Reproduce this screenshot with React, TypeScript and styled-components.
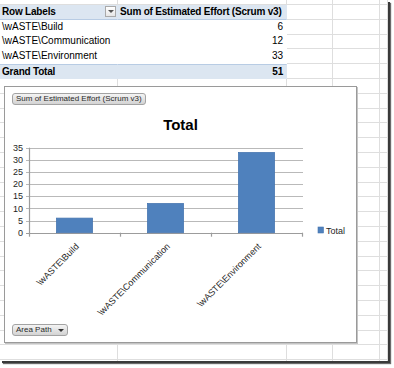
import React from "react";
import styled, { createGlobalStyle } from "styled-components";

const GlobalStyle = createGlobalStyle`
  html, body { margin: 0; padding: 0; background: #ffffff; }
  body { font-family: "Liberation Sans", Arial, sans-serif; }
`;

const GRID = "#dedede";
const BAND = "#dce6f1";
const BAND_LINE = "#b8cce4";
const COLS = [118, 169, 46, 47, 8];
const ROW_H = 14.8;

const Canvas = styled.div`
  width: 394px;
  height: 368px;
  overflow: hidden;
  background: #ffffff;
`;

const Sheet = styled.div`
  position: relative;
  width: 388px;
  height: 361px;
  background: #ffffff;
  overflow: hidden;
  display: flex;
  flex-direction: column;
`;

const SheetShadow = styled.div`
  width: 388px;
  height: 361px;
  box-shadow: 2px 2px 0 #3a3a3a, 3px 3px 1px #6a6a6a;
`;

const Row = styled.div<{ $h: number }>`
  display: flex;
  flex: 0 0 auto;
  height: ${(p) => p.$h}px;
`;

const Cell = styled.div<{
  $w: number;
  $fill?: string;
  $bold?: boolean;
  $right?: boolean;
  $plain?: boolean;
  $top?: string;
  $bottom?: string;
}>`
  box-sizing: border-box;
  flex: 0 0 ${(p) => p.$w}px;
  height: 100%;
  display: flex;
  align-items: center;
  justify-content: ${(p) => (p.$right ? "flex-end" : "space-between")};
  padding: 0 3px 0 2px;
  background: ${(p) => p.$fill || "#ffffff"};
  border-right: 1px solid ${(p) => (p.$plain ? p.$fill || "#ffffff" : GRID)};
  border-bottom: 1px solid ${(p) => p.$bottom || (p.$plain ? p.$fill || "#ffffff" : GRID)};
  border-top: ${(p) => (p.$top ? `1px solid ${p.$top}` : "none")};
  font-size: 10px;
  font-weight: ${(p) => (p.$bold ? 700 : 400)};
  letter-spacing: ${(p) => (p.$bold ? "-0.2px" : "0")};
  color: #000000;
  white-space: nowrap;
  overflow: hidden;
  line-height: 12px;
`;

const DropButton = styled.span`
  box-sizing: border-box;
  width: 11px;
  height: 11px;
  border: 1px solid #a9a9a9;
  background: linear-gradient(#ffffff, #e6e6e6);
  display: flex;
  align-items: center;
  justify-content: center;
  margin-right: -2px;
  &::after {
    content: "";
    border-left: 3px solid transparent;
    border-right: 3px solid transparent;
    border-top: 3px solid #555555;
  }
`;

const ChartFrame = styled.div`
  position: absolute;
  left: 4px;
  top: 86px;
  width: 353px;
  height: 257px;
  box-sizing: border-box;
  background: #ffffff;
  border: 1px solid #9a9a9a;
  box-shadow: 1px 1px 0 #c4c4c4;
  display: flex;
  flex-direction: column;
  align-items: stretch;
`;

const FieldButton = styled.div<{ $ml: number; $mt: number }>`
  align-self: flex-start;
  box-sizing: border-box;
  height: 12px;
  margin: ${(p) => p.$mt}px 0 0 ${(p) => p.$ml}px;
  padding: 0 3px;
  border: 1px solid #a3a3a3;
  border-radius: 3px;
  background: linear-gradient(#f4f4f4, #d3d3d3);
  font-size: 8px;
  line-height: 10px;
  color: #2a2a2a;
  white-space: nowrap;
  display: flex;
  align-items: center;
  gap: 6px;
`;

const Caret = styled.span`
  width: 0;
  height: 0;
  border-left: 3px solid transparent;
  border-right: 3px solid transparent;
  border-top: 3px solid #333333;
`;

const Title = styled.div`
  margin-top: 11px;
  height: 18px;
  line-height: 18px;
  text-align: center;
  font-size: 15px;
  font-weight: 700;
  color: #000000;
`;

const Plot = styled.svg`
  display: block;
  margin-top: 9px;
  flex: 0 0 auto;
`;

const Y0 = 89.7;
const UNIT = 12.143 / 5;
const yOf = (v: number) => Y0 - v * UNIT;

const data = [
  { label: "\\wASTE\\Build", value: 6 },
  { label: "\\wASTE\\Communication", value: 12 },
  { label: "\\wASTE\\Environment", value: 33 },
];

const ticks = [0, 5, 10, 15, 20, 25, 30, 35];
const catTicks = [24, 115, 206, 297];

const ChartPlot: React.FC = () => (
  <Plot width={351} height={180} viewBox="0 0 351 180">
    {ticks.map((t) => (
      <g key={t}>
        <line
          x1={21}
          x2={298}
          y1={Math.round(yOf(t)) + 0.5}
          y2={Math.round(yOf(t)) + 0.5}
          stroke={t === 0 ? "#9c9c9c" : "#b9b9b9"}
          strokeWidth={1.2}
        />
        <text
          x={18}
          y={yOf(t) + 3.2}
          textAnchor="end"
          fontSize={9}
          fontFamily="Liberation Sans, Arial, sans-serif"
          fill="#1e1e1e"
        >
          {t}
        </text>
      </g>
    ))}
    <line x1={24.5} x2={24.5} y1={yOf(35)} y2={Y0 + 1} stroke="#9c9c9c" strokeWidth={1.2} />
    {catTicks.map((x) => (
      <line key={x} x1={x + 0.5} x2={x + 0.5} y1={Y0} y2={Y0 + 4} stroke="#9c9c9c" strokeWidth={1.2} />
    ))}
    {data.map((d, i) => {
      const cx = 69.5 + i * 91;
      const top = yOf(d.value);
      return (
        <g key={d.label}>
          <rect
            x={cx - 18}
            y={top}
            width={36}
            height={Y0 - top}
            fill="#4f81bd"
            stroke="#4675b0"
            strokeWidth={0.8}
          />
          <text
            x={cx + 5}
            y={104}
            textAnchor="end"
            fontSize={9}
            fontFamily="Liberation Sans, Arial, sans-serif"
            fill="#1e1e1e"
            transform={`rotate(-45 ${cx + 5} 104)`}
          >
            {d.label}
          </text>
        </g>
      );
    })}
    <rect x={313} y={84} width={5.5} height={6} fill="#4f81bd" stroke="#4675b0" strokeWidth={0.6} />
    <text x={321} y={91} fontSize={9} fontFamily="Liberation Sans, Arial, sans-serif" fill="#1e1e1e">
      Total
    </text>
  </Plot>
);

type CellSpec = {
  text?: string;
  bold?: boolean;
  right?: boolean;
  fill?: string;
  plain?: boolean;
  top?: string;
  bottom?: string;
  drop?: boolean;
};

const blank = (): CellSpec[] => COLS.map(() => ({}));

const pivotRow = (a: CellSpec, b: CellSpec): CellSpec[] => [a, b, {}, {}, {}];

const rows: { h: number; cells: CellSpec[] }[] = [
  { h: 5, cells: blank() },
  {
    h: ROW_H,
    cells: pivotRow(
      { text: "Row Labels", bold: true, fill: BAND, plain: true, bottom: BAND_LINE, drop: true },
      { text: "Sum of Estimated Effort (Scrum v3)", bold: true, fill: BAND, plain: true, bottom: BAND_LINE }
    ),
  },
  ...data.map((d) => ({
    h: ROW_H,
    cells: pivotRow(
      { text: d.label, plain: true },
      { text: String(d.value), right: true, plain: true }
    ),
  })),
  {
    h: ROW_H,
    cells: pivotRow(
      { text: "Grand Total", bold: true, fill: BAND, plain: true, top: BAND_LINE },
      { text: "51", bold: true, right: true, fill: BAND, plain: true, top: BAND_LINE }
    ),
  },
  ...Array.from({ length: 20 }, () => ({ h: ROW_H, cells: blank() })),
];

export default function App() {
  return (
    <Canvas>
      <GlobalStyle />
      <SheetShadow>
        <Sheet>
          {rows.map((r, ri) => (
            <Row key={ri} $h={r.h}>
              {r.cells.map((c, ci) => (
                <Cell
                  key={ci}
                  $w={COLS[ci]}
                  $fill={c.fill}
                  $bold={c.bold}
                  $right={c.right}
                  $plain={c.plain}
                  $top={c.top}
                  $bottom={c.bottom}
                >
                  {c.text && <span>{c.text}</span>}
                  {c.drop && <DropButton />}
                </Cell>
              ))}
            </Row>
          ))}
          <ChartFrame>
            <FieldButton $ml={7} $mt={6}>Sum of Estimated Effort (Scrum v3)</FieldButton>
            <Title>Total</Title>
            <ChartPlot />
            <FieldButton $ml={7} $mt={1}>
              Area Path
              <Caret />
            </FieldButton>
          </ChartFrame>
        </Sheet>
      </SheetShadow>
    </Canvas>
  );
}
